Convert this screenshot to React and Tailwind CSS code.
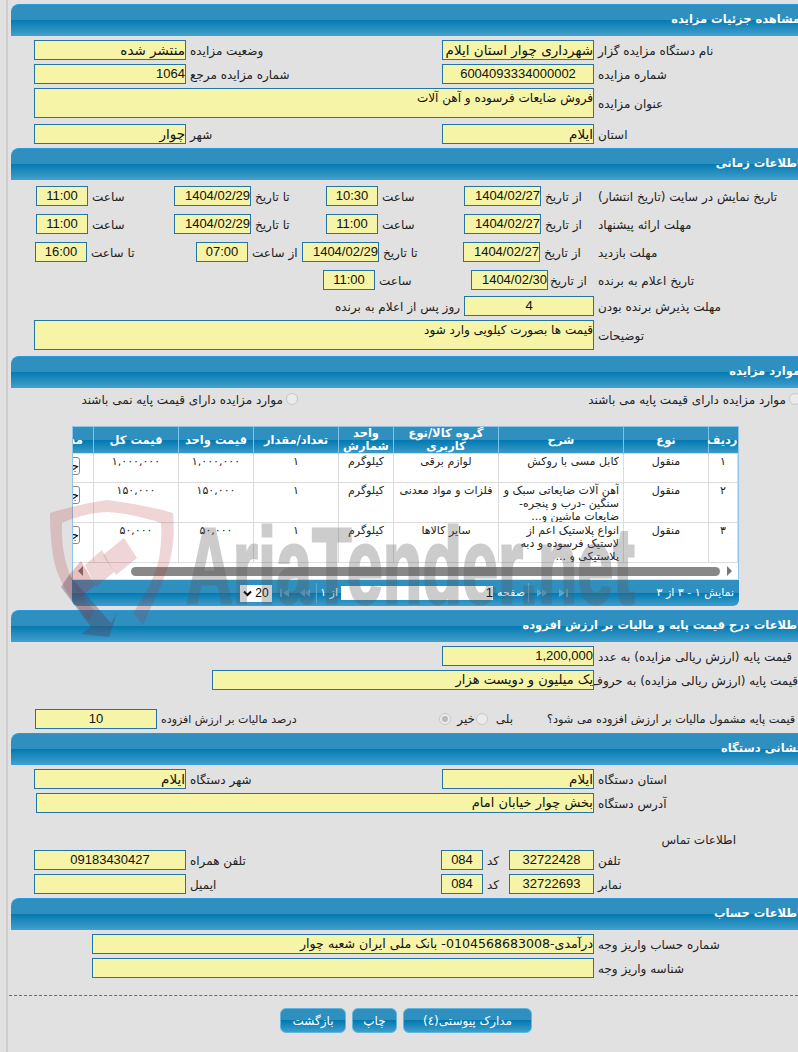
import React from 'react';

const barBg = 'bg-[linear-gradient(#2f8fbf_0%,#2f8fbf_50%,#0379b1_50%,#3f9ecb_100%)]';
const arabic = "font-['DejaVu_Sans',sans-serif] text-[12px]";
const latin = "font-['Liberation_Sans',sans-serif] text-[13px]";

const Section = ({ title, titleClass = '', children }) => (
  <section>
    <div className={`ml-[3px] h-8 flex items-center rounded-tl-[8px] border-t border-b border-t-[#2a96e0] border-b-[#3b9fdc] ${barBg}`}>
      <span className={`font-bold text-[11.5px] text-white whitespace-nowrap ${titleClass}`}>{title}</span>
    </div>
    {children}
  </section>
);

// yellow read only box, top = multi line box with the smaller text
const F = ({ w, h = 'h-5', num, center, top, children }) => (
  <div
    className={`${w} ${h} shrink-0 border border-[#2474a8] bg-[#f6f4a6] text-[#111] whitespace-nowrap overflow-hidden flex ${top ? 'items-start' : 'items-center'} ${center ? 'justify-center' : 'justify-start'} ${num ? latin : top ? 'font-["DejaVu_Sans",sans-serif] text-[12px]' : 'font-["DejaVu_Sans",sans-serif] text-[13.5px]'}`}
    dir={num ? 'ltr' : 'rtl'}
    style={num && !center ? { justifyContent: 'flex-end' } : undefined}
  >
    {children}
  </div>
);

const L = ({ w, children, pl = 'pl-1', size = '' }) => (
  <div className={`${w} ${pl} ${size} pt-[2px] shrink-0 text-left whitespace-nowrap text-[#222]`}>{children}</div>
);

const Row = ({ className = 'mt-1', children }) => (
  <div className={`flex items-center ${className}`}>{children}</div>
);

const Radio = ({ checked }) => (
  <span className={`block w-3 h-3 shrink-0 rounded-full border border-[#c8c8c8] bg-[#ebebeb] ${checked ? 'p-[2px]' : ''}`}>
    {checked && <span className="block w-full h-full rounded-full bg-[#b9b9b9]" />}
  </span>
);

const items = [
  { no: '۱', kind: 'منقول', desc: <>کابل مسی با روکش</>, group: 'لوازم برقی', unit: 'کیلوگرم', qty: '۱', price: '۱,۰۰۰,۰۰۰', h: 'h-[29px]' },
  { no: '۲', kind: 'منقول', desc: <>آهن آلات ضایعاتی سبک و<br />سنگین -درب و پنجره-<br />ضایعات ماشین و...</>, group: 'فلزات و مواد معدنی', unit: 'کیلوگرم', qty: '۱', price: '۱۵۰,۰۰۰', h: 'h-10' },
  { no: '۳', kind: 'منقول', desc: <>انواع پلاستیک اعم از<br />لاستیک فرسوده و دبه<br />پلاستیکی و ...</>, group: 'سایر کالاها', unit: 'کیلوگرم', qty: '۱', price: '۵۰,۰۰۰', h: 'h-10' },
];

const Th = ({ w, children }) => (
  <th className={`${w} border-r border-[#7cc4ea] first:border-r-0 p-0 font-bold text-[11.5px] text-white text-center leading-[13px]`}>{children}</th>
);

const Td = ({ children, className = 'text-center' }) => (
  <td className={`border border-[#dcdcdc] align-top p-0 px-1 text-[11px] leading-[13px] whitespace-nowrap text-[#222] ${className}`}>
    <div className="max-h-[39px] pt-px overflow-hidden">{children}</div>
  </td>
);

const PagerIcon = ({ flip, bar }) => (
  <svg width="10" height="8" viewBox="0 0 10 8" className={flip ? 'rotate-180' : ''} fill="#5aa8d0">
    {bar ? (
      <>
        <rect x="0" y="0" width="2" height="8" />
        <path d="M3 4 L9 0 V8 Z" />
      </>
    ) : (
      <>
        <path d="M0 4 L5 0 V8 Z" />
        <path d="M5 4 L10 0 V8 Z" />
      </>
    )}
  </svg>
);

const Items = () => (
  <div className="mt-5 mr-[59px] ml-[64px]">
    <div className="border border-[#8fc5e8] border-b-0 overflow-hidden bg-white" dir="rtl">
      <table className="table-fixed border-collapse w-[705px]">
        <thead>
          <tr className={`h-[26px] ${barBg}`}>
            <Th w="w-[29px]">ردیف</Th>
            <Th w="w-[85px]">نوع</Th>
            <Th w="w-[125px]">شرح</Th>
            <Th w="w-[105px]">گروه کالا/نوع<br />کاربری</Th>
            <Th w="w-[55px]">واحد<br />شمارش</Th>
            <Th w="w-[85px]">تعداد/مقدار</Th>
            <Th w="w-[75px]">قیمت واحد</Th>
            <Th w="w-[85px]">قیمت کل</Th>
            <Th w="w-[61px]"><span className="block text-right pr-[10px]">مدارک</span></Th>
          </tr>
        </thead>
        <tbody>
          {items.map((it) => (
            <tr key={it.no} className={it.h}>
              <Td>{it.no}</Td>
              <Td>{it.kind}</Td>
              <Td className="text-right">{it.desc}</Td>
              <Td>{it.group}</Td>
              <Td>{it.unit}</Td>
              <Td>{it.qty}</Td>
              <Td>{it.price}</Td>
              <Td>{it.price}</Td>
              <td className="border border-[#dcdcdc] align-top pt-[3px] pr-[13px]">
                <button className="block w-[40px] h-[18px] rounded-[3px] border border-[#8a8a8a] bg-white text-right text-black leading-[14px] overflow-hidden whitespace-nowrap">جزئیات</button>
              </td>
            </tr>
          ))}
        </tbody>
      </table>
      <div className="h-4 flex items-center">
        <span className="w-0 h-0 mr-[6px] border-y-[5px] border-y-transparent border-l-[5px] border-l-[#777]" />
        <span className="w-[589px] h-[9px] mr-[7px] rounded-full bg-[#888]" />
        <span className="w-0 h-0 mr-[48px] border-y-[5px] border-y-transparent border-r-[5px] border-r-[#777]" />
      </div>
    </div>
    <div className={`h-[26px] mt-[1px] rounded-b-[6px] flex items-center text-[11px] text-white ${barBg}`}>
      <span className="w-[82px] pr-[5px] whitespace-nowrap">نمایش ۱ - ۳ از ۳</span>
      <span className="mr-[89px] flex items-center gap-[11px]">
        <PagerIcon bar flip />
        <PagerIcon flip />
      </span>
      <span className="w-px h-5 bg-[#5aa8d0] mr-2" />
      <span className="w-[29px] mr-[3px] whitespace-nowrap">صفحه</span>
      <span dir="ltr" className={`w-[152px] mr-[3px] h-[14px] bg-white text-black flex items-center justify-end ${latin}`}>1</span>
      <span className="mr-[3px] w-4 whitespace-nowrap">از ۱</span>
      <span className="w-px h-5 bg-[#5aa8d0] mr-[5px]" />
      <span className="flex items-center gap-[10px] mr-[6px]">
        <PagerIcon />
        <PagerIcon bar />
      </span>
      <span dir="ltr" className="mr-2 w-8 h-[17px] bg-white text-black flex items-center justify-center gap-[3px] font-['Liberation_Sans',sans-serif] text-[12px]">
        <svg width="9" height="7" viewBox="0 0 9 7"><path d="M1 1.5 L4.5 5 L8 1.5" fill="none" stroke="#000" strokeWidth="2" /></svg>
        20
      </span>
    </div>
  </div>
);

// site watermark, lies over the whole page
const Watermark = () => (
  <div className="absolute inset-0 pointer-events-none overflow-hidden" dir="ltr">
    <svg className="absolute left-[45px] top-[495px]" width="140" height="150" viewBox="0 0 140 150">
      <g fill="rgb(175,45,45)" fillOpacity="0.2">
        <path d="M5 18 C25 12 42 8 62 5 C85 8 108 12 128 18 C130 40 128 62 120 80 C114 96 106 112 98 130 L88 118 C100 100 110 82 114 64 C116 50 117 38 116 28 C98 22 80 18 62 17 C44 18 30 22 17 28 C16 50 20 72 30 90 C36 100 42 108 50 116 L44 126 C28 108 14 88 9 66 C6 50 5 34 5 18 Z" />
        <path d="M79 43 L92 63 L71 80 L58 60 Z" />
        <path d="M57 55 L69 77 L51 92 L40 70 Z" />
        <path d="M36 66 L50 90 L36 102 L24 80 Z" fillOpacity="0.3" />
        <path d="M24 80 L66 128 L72 118 L64 142 L36 139 L46 132 L16 92 Z" fill="rgb(90,60,80)" fillOpacity="0.35" />
      </g>
    </svg>
    <div className="absolute left-[186px] top-[507px] origin-left scale-x-[0.6] opacity-30 font-['Liberation_Sans',sans-serif] font-bold text-[108px] leading-[118px] text-[#5a5a5a] [-webkit-text-stroke:3px_#5a5a5a] whitespace-nowrap">
      AriaTender.net
    </div>
  </div>
);

export default function App() {
  return (
    <div dir="rtl" className={`relative w-[798px] h-[1052px] overflow-hidden bg-[#e1e1e1] ${arabic}`}>
      <div className="h-full ml-[6px] border-l-2 border-[#cdcdcd] pt-1">
        <Section title="مشاهده جزئیات مزایده" titleClass="-mr-[2px]">
          <Row>
            <L w="w-[204px]">نام دستگاه مزایده گزار</L>
            <F w="w-[152px]">شهرداری چوار استان ایلام</F>
            <L w="w-[256px]">وضعیت مزایده</L>
            <F w="w-[152px]">منتشر شده</F>
          </Row>
          <Row>
            <L w="w-[204px]">شماره مزایده</L>
            <F w="w-[152px]" num center>6004093334000002</F>
            <L w="w-[256px]">شماره مزایده مرجع</L>
            <F w="w-[152px]" num>1064</F>
          </Row>
          <Row>
            <L w="w-[204px]">عنوان مزایده</L>
            <F w="w-[560px]" h="h-[30px]" top>فروش ضایعات فرسوده و آهن آلات</F>
          </Row>
          <Row className="mt-[6px]">
            <L w="w-[204px]">استان</L>
            <F w="w-[152px]">ایلام</F>
            <L w="w-[256px]">شهر</L>
            <F w="w-[152px]">چوار</F>
          </Row>
        </Section>

        <div className="mt-1">
          <Section title="اطلاعات زمانی" titleClass="-mr-[3px]">
            <Row className="mt-[6px]">
              <L w="w-[204px]">تاریخ نمایش در سایت (تاریخ انتشار)</L>
              <L w="w-[53px]">از تاریخ</L>
              <F w="w-[77px]" num>1404/02/27</F>
              <L w="w-[86px]">ساعت</L>
              <F w="w-[52px]" num center>10:30</F>
              <L w="w-[75px]">تا تاریخ</L>
              <F w="w-[77px]" num>1404/02/29</F>
              <L w="w-[86px]">ساعت</L>
              <F w="w-[52px]" num center>11:00</F>
            </Row>
            <Row className="mt-2">
              <L w="w-[204px]">مهلت ارائه پیشنهاد</L>
              <L w="w-[53px]">از تاریخ</L>
              <F w="w-[77px]" num>1404/02/27</F>
              <L w="w-[86px]">ساعت</L>
              <F w="w-[52px]" num center>11:00</F>
              <L w="w-[75px]">تا تاریخ</L>
              <F w="w-[77px]" num>1404/02/29</F>
              <L w="w-[86px]">ساعت</L>
              <F w="w-[52px]" num center>11:00</F>
            </Row>
            <Row className="mt-2">
              <L w="w-[204px]">مهلت بازدید</L>
              <L w="w-[54px]">از تاریخ</L>
              <F w="w-[77px]" num>1404/02/27</F>
              <L w="w-[84px]">تا تاریخ</L>
              <F w="w-[77px]" num>1404/02/29</F>
              <L w="w-[54px]">از ساعت</L>
              <F w="w-[52px]" num center>07:00</F>
              <L w="w-[109px]">تا ساعت</L>
              <F w="w-[52px]" num center>16:00</F>
            </Row>
            <Row className="mt-2">
              <L w="w-[204px]">تاریخ اعلام به برنده</L>
              <L w="w-[46px]" pl="pl-[2px]">از تاریخ</L>
              <F w="w-[77px]" num>1404/02/30</F>
              <L w="w-[96px]">ساعت</L>
              <F w="w-[52px]" num center>11:00</F>
            </Row>
            <Row className="mt-[6px]">
              <L w="w-[204px]">مهلت پذیرش برنده بودن</L>
              <F w="w-[130px]" num center>4</F>
              <span className="pr-1 pt-[2px] whitespace-nowrap text-[#222]">روز پس از اعلام به برنده</span>
            </Row>
            <Row>
              <L w="w-[204px]">توضیحات</L>
              <F w="w-[560px]" h="h-[30px]" top>قیمت ها بصورت کیلویی وارد شود</F>
            </Row>
          </Section>
        </div>

        <div className="mt-[6px]">
          <Section title="موارد مزایده" titleClass="-mr-[2px]">
            <div className="flex items-center h-[14px] mt-1 -mr-[3px] text-[#222]">
              <Radio />
              <span className="w-[491px] pr-[3px] pt-[2px] whitespace-nowrap">موارد مزایده دارای قیمت پایه می باشند</span>
              <Radio />
              <span className="pr-[3px] pt-[2px] whitespace-nowrap">موارد مزایده دارای قیمت پایه نمی باشند</span>
            </div>
            <Items />
          </Section>
        </div>

        <div className="mt-1">
          <Section title="اطلاعات درج قیمت پایه و مالیات بر ارزش افزوده" titleClass="-mr-[3px]">
            <Row>
              <L w="w-[204px]">قیمت پایه (ارزش ریالی مزایده) به عدد</L>
              <F w="w-[152px]" num>1,200,000</F>
            </Row>
            <Row>
              <L w="w-[204px]">قیمت پایه (ارزش ریالی مزایده) به حروف</L>
              <F w="w-[382px]"><span className="text-[13px]">یک میلیون و دویست هزار</span></F>
            </Row>
            <Row className="mt-[19px]">
              <div className="w-[271px] -mr-[20px] pt-[2px] shrink-0 text-left text-[11.3px] whitespace-nowrap text-[#222]">قیمت پایه مشمول مالیات بر ارزش افزوده می شود؟</div>
              <span className="mr-[34px] w-[25px] whitespace-nowrap text-[#222]">بلی</span>
              <Radio />
              <span className="mr-px w-6 whitespace-nowrap text-[#222]">خیر</span>
              <Radio checked />
              <L w="w-[282px]" size="text-[11px]">درصد مالیات بر ارزش افزوده</L>
              <F w="w-[122px]" num center>10</F>
            </Row>
          </Section>
        </div>

        <div className="mt-1">
          <Section title="نشانی دستگاه" titleClass="-mr-[3px]">
            <Row>
              <L w="w-[204px]">استان دستگاه</L>
              <F w="w-[152px]">ایلام</F>
              <L w="w-[256px]">شهر دستگاه</L>
              <F w="w-[152px]">ایلام</F>
            </Row>
            <Row>
              <L w="w-[204px]">آدرس دستگاه</L>
              <F w="w-[558px]"><span className="text-[13px]">بخش چوار خیابان امام</span></F>
            </Row>
            <div className="mt-[18px] mr-[62px] h-[15px] text-[#222]">اطلاعات تماس</div>
            <Row>
              <L w="w-[204px]">تلفن</L>
              <F w="w-[85px]" num center>32722428</F>
              <L w="w-[26px]">کد</L>
              <F w="w-[42px]" num center>084</F>
              <L w="w-[255px]">تلفن همراه</L>
              <F w="w-[152px]" num center>09183430427</F>
            </Row>
            <Row>
              <L w="w-[204px]">نمابر</L>
              <F w="w-[85px]" num center>32722693</F>
              <L w="w-[26px]">کد</L>
              <F w="w-[42px]" num center>084</F>
              <L w="w-[255px]">ایمیل</L>
              <F w="w-[152px]" />
            </Row>
          </Section>
        </div>

        <div className="mt-1">
          <Section title="اطلاعات حساب" titleClass="-mr-[3px]">
            <Row>
              <L w="w-[204px]">شماره حساب واریز وجه</L>
              <F w="w-[502px]"><span className="text-[12.6px]">درآمدی-0104568683008- بانک ملی ایران شعبه چوار</span></F>
            </Row>
            <Row>
              <L w="w-[204px]">شناسه واریز وجه</L>
              <F w="w-[502px]" />
            </Row>
          </Section>
        </div>

        <div className="mt-[17px] ml-px border-t border-dashed border-[#2c7fae]" />
        <div className="mt-3 flex gap-[6px] mr-[266px] w-fit">
          {['مدارک پیوستی(٤)', 'چاپ', 'بازگشت'].map((label, i) => (
            <button
              key={label}
              className={`h-[25px] rounded-[6px] border border-[#5fb5dd] text-white ${barBg} ${i === 0 ? 'w-[129px]' : i === 1 ? 'w-[45px]' : 'w-[66px]'}`}
            >
              {label}
            </button>
          ))}
        </div>
      </div>
      <Watermark />
    </div>
  );
}
